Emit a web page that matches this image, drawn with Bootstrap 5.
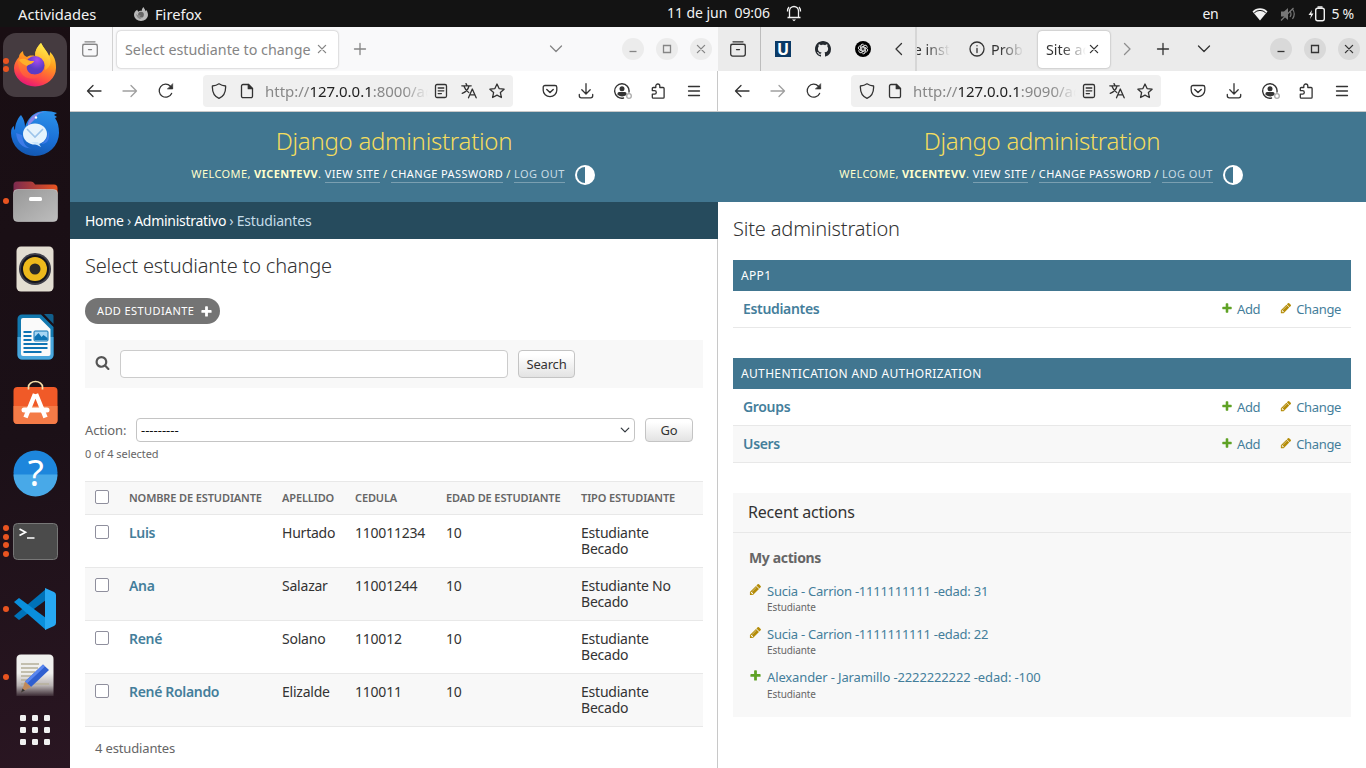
<!DOCTYPE html>
<html lang="es">
<head>
<meta charset="utf-8">
<meta name="viewport" content="width=device-width, initial-scale=1">
<title>Django administration</title>
<link href="https://cdn.jsdelivr.net/npm/bootstrap@5.3.0/dist/css/bootstrap.min.css" rel="stylesheet">
<style>
  :root { --primary:#417690; --lk:#447e9b; --crumb:#264b5d; --hair:#e8e8e8; --soft:#f8f8f8; }
  body { width:1366px; height:768px; overflow:hidden; font-family:"Noto Sans","Open Sans",sans-serif; font-size:14px; line-height:16px; color:#333; background:#fff; }
  svg { display:block; flex:none; }
  .i16 { width:16px; height:16px; fill:none; stroke:currentColor; stroke-width:1.3; stroke-linecap:round; stroke-linejoin:round; }

  /* desktop panel */
  .top-panel { height:27px; background:#131313; color:#f2f2f2; font-size:14px; letter-spacing:-.25px; display:grid; grid-template-columns:134px 533px 1fr 48px 1fr; }
  .top-panel .menu-text { font-size:14.7px; letter-spacing:0; }
  .top-panel .clock { letter-spacing:-.05px; padding-bottom:1px; }
  .desk { height:741px; }

  /* dock */
  .dock { width:70px; background:linear-gradient(165deg,#190e13 0%,#1b1017 55%,#2a1622 100%); padding-top:4px; }
  .slot { height:68px; position:relative; padding:2px 3px; }
  .slot .tile { width:64px; height:64px; border-radius:13px; }
  .slot.active .tile { background:#453b40; }
  .dots { position:absolute; left:3px; top:0; height:68px; gap:2.6px; }
  .dots i { width:6px; height:6px; border-radius:50%; background:#e95420; }

  /* browser window */
  .win { width:648px; background:#fff; }
  .win.left { box-shadow:inset -1px 0 #c8c8c8; }
  .tabs { height:44px; background:#ebebeb; color:#333; }
  .left .tabs { background:#f9f9fa; color:#858585; }
  .tabs .cell { height:44px; }
  .archive { width:43px; border-right:1px solid #bdbdbd; padding-right:3px; }
  .left .archive { border-color:#d2d2d2; }
  .tab-on { height:37px; border-radius:4px; background:#fff; box-shadow:0 0 2px rgba(0,0,0,.38); font-size:14.3px; }
  .left .tab-on { width:221px; margin-left:4px; padding-left:8px; }
  .right .tab-on { width:72px; margin-left:14px; padding-left:8px; }
  .clip { overflow:hidden; white-space:nowrap; line-height:22px; }
  .tabs .clip { padding-top:1px; }
  .fade-r { -webkit-mask-image:linear-gradient(90deg,#000 calc(100% - 24px),transparent); mask-image:linear-gradient(90deg,#000 calc(100% - 24px),transparent); }
  .wbtn { width:22px; height:22px; border-radius:50%; background:#d9d9d9; }
  .left .wbtn { background:#ececec; }
  .tools { height:41px; border-bottom:1px solid #c9c9c9; padding:0 5px 0 6px; color:#333; }
  .tools .tb { width:36px; }
  .urlbar { width:310px; height:32px; background:#f0f0f0; border-radius:4px; margin:0 19px; padding:0 8px; font-size:15px; }
  .url { width:163px; margin-left:10px; color:#888; letter-spacing:-.02px; }
  .url b { font-weight:400; color:#222; }

  /* admin header */
  .adm-head { height:90px; background:var(--primary); padding-top:15px; }
  .adm-head h1 { font-size:24px; line-height:28px; font-weight:300; color:#f5dd5d; margin:0; letter-spacing:-.27px; }
  .user-line { font-size:11px; color:#ffc; letter-spacing:.4px; line-height:14px; margin-top:11px; height:15px; padding-right:2px; }
  .user-line svg { position:relative; top:1px; }
  .user-line a { color:#fff; text-decoration:none; border-bottom:1px solid rgba(255,255,255,.3); padding-bottom:1px; }
  .user-line a.out { color:#c9dbe4; }
  .crumbs { height:37px; background:var(--crumb); padding-left:15px; color:#c4dce8; --bs-breadcrumb-divider:'›'; }
  .crumbs .breadcrumb-item { font-size:14px; letter-spacing:-.28px; padding:0; }
  .crumbs .breadcrumb-item + .breadcrumb-item::before { padding:0 3.2px; color:#c4dce8; }
  .crumbs .breadcrumb-item a { color:#fff; text-decoration:none; }
  .crumbs .breadcrumb-item.active { color:#c4dce8; letter-spacing:-.16px; }
  .page-title { font-size:20px; line-height:24px; font-weight:300; margin:0; letter-spacing:-.17px; }

  /* change list */
  .btn-pill { width:135px; height:26px; border-radius:13px; background:#747474; color:#fff; font-size:11px; letter-spacing:.4px; padding:0 7px 0 12px; }
  .searchbar { height:48px; background:var(--soft); padding:0 10px; }
  .searchbar .form-control { width:388px; height:28px; border-color:#ccc; border-radius:4px; padding:0 6px; }
  .btn-soft { border:1px solid #c4c4c4; border-radius:4px; background:linear-gradient(#fff 15%,#e3e3e3); font-size:13px; color:#333; line-height:16px; padding:0; letter-spacing:-.2px; }
  .action-line { font-size:13px; color:#666; letter-spacing:-.1px; }
  .action-line .form-select { width:499px; height:24px; border-color:#c4c4c4; border-radius:4px; font-size:13px; line-height:16px; padding:0 4px; color:#111; background-position:right 4px center; background-size:10px; }
  .counter { font-size:11px; color:#666; line-height:14px; letter-spacing:-.05px; }
  .grid-list { width:618px; table-layout:fixed; border-collapse:separate; border-spacing:0; margin:0; }
  .grid-list > :not(caption) > * > * { padding:10px; border-bottom:1px solid var(--hair); line-height:16px; vertical-align:top; color:#333; letter-spacing:-.22px; }
  .grid-list > thead > tr > th { height:33px; padding:8px 10px 8px; font-size:11px; line-height:16px; color:#666; font-weight:600; background:var(--soft); border-top:1px solid var(--hair); letter-spacing:-.12px; white-space:nowrap; }
  .grid-list > tbody > tr:nth-child(even) > td { background:var(--soft); }
  .grid-list a { color:var(--lk); text-decoration:none; font-weight:600; letter-spacing:-.33px; }
  .grid-list .form-check-input { width:14px; height:14px; margin:0; border:1px solid #8f8f9d; border-radius:2px; display:block; float:none; }
  .foot-count { font-size:13px; color:#666; padding:13px 10px; letter-spacing:-.15px; }

  /* index */
  .mod-head { height:31px; background:var(--primary); color:#fff; font-size:12px; letter-spacing:.34px; padding:0 8px; }
  .mod-row { height:37px; border-bottom:1px solid var(--hair); padding:0 10px; }
  .mod-row:nth-child(3) { background:var(--soft); }
  .mod-row a, .acts a { color:var(--lk); text-decoration:none; }
  .mod-row .nm { font-weight:600; letter-spacing:-.33px; }
  .mod-row .op { font-size:13px; letter-spacing:-.36px; }
  .mod-row .op svg { margin-right:4px; position:relative; top:-1px; }
  .recent { height:224px; background:var(--soft); }
  .recent h2 { height:40px; border-bottom:1px solid var(--hair); font-size:16px; font-weight:400; margin:0; padding:0 15px; letter-spacing:-.18px; }
  .recent h3 { font-size:14px; line-height:16px; font-weight:700; color:#666; margin:17px 16px 0; letter-spacing:-.36px; }
  .acts { margin:16px 16px 0; font-size:13px; }
  .acts li { height:43px; padding-top:1px; }
  .acts a { display:block; letter-spacing:-.25px; }
  .acts li:last-child a { letter-spacing:-.13px; }
  .acts span { display:block; font-size:10px; line-height:12px; color:#666; margin-top:2px; letter-spacing:-.1px; }
  .acts li:last-child span { margin-top:3px; }
</style>
</head>
<body>
<svg width="0" height="0" class="position-absolute" aria-hidden="true">
  <defs>
    <symbol id="archive" viewBox="0 0 16 16"><path d="M3 .8h10M1 3.3h14"/><rect x=".7" y="3.3" width="14.6" height="11.8" rx="2"/><path d="M6.5 8.6h3"/></symbol>
    <symbol id="x" viewBox="0 0 16 16"><path d="M4.4 4.4l7.2 7.2M11.6 4.4l-7.2 7.2"/></symbol>
    <symbol id="plus" viewBox="0 0 16 16"><path d="M8 2.5v11M2.5 8h11"/></symbol>
    <symbol id="down" viewBox="0 0 16 16"><path d="M2.5 5l5.5 5.5L13.500 5"/></symbol>
    <symbol id="lt" viewBox="0 0 16 16"><path d="M10.500 2.500L5 8l5.500 5.500"/></symbol>
    <symbol id="gt" viewBox="0 0 16 16"><path d="M5.500 2.500L11 8l-5.500 5.500"/></symbol>
    <symbol id="min" viewBox="0 0 16 16"><path d="M4.500 10.500h7" stroke-linecap="butt"/></symbol>
    <symbol id="max" viewBox="0 0 16 16"><path d="M4.500 4.500h7v7h-7z" stroke-linejoin="miter"/></symbol>
    <symbol id="back" viewBox="0 0 16 16"><path d="M15 8H1.500M7 2.500L1.500 8 7 13.500"/></symbol>
    <symbol id="fwd" viewBox="0 0 16 16"><path d="M1 8h13.500M9 2.500L14.500 8 9 13.500"/></symbol>
    <symbol id="reload" viewBox="0 0 16 16"><path d="M13.600 10.400A6.500 6.500 0 1 1 12.400 3.200L14.200 5"/><path d="M14.700 1v5h-5z" fill="currentColor" stroke-width=".6"/></symbol>
    <symbol id="shield" viewBox="0 0 16 16"><path d="M8 .8C6 2.200 3.800 2.800 1.400 3c-.3 5.800 1.300 10 6.600 12.300C13.300 13 14.900 8.800 14.600 3 12.200 2.800 10 2.200 8 .8z"/></symbol>
    <symbol id="page" viewBox="0 0 16 16"><path d="M4 1.500h5.500l4 4v7.700a1.500 1.500 0 0 1-1.500 1.500H4a1.500 1.500 0 0 1-1.500-1.500V3A1.500 1.500 0 0 1 4 1.500z"/><path d="M9.300 1.500v4.200h4.200z" fill="currentColor"/></symbol>
    <symbol id="reader" viewBox="0 0 16 16"><rect x="2.500" y="1.500" width="11" height="13" rx="1.500"/><path d="M5.200 5h5.600M5.200 7.800h5.600M5.200 10.600h3.200"/></symbol>
    <symbol id="trans" viewBox="0 0 16 16"><path d="M.8 2.800h9.400M5 .6l1 2M8 3C7.300 6 4.500 9 1.200 10.300M3 3.200c1 3 2.600 5 4.800 6.300" /><path d="M7.500 14.800L11.300 6l3.900 8.800M8.900 11.800h5"/></symbol>
    <symbol id="star" viewBox="0 0 16 16"><path d="M8 1l2.100 4.600 5 .6-3.700 3.400 1 4.900L8 12.100l-4.400 2.400 1-4.900L.9 6.200l5-.6z"/></symbol>
    <symbol id="pocket" viewBox="0 0 16 16"><path d="M3 2.500h10a1.800 1.800 0 0 1 1.800 1.800v3a6.800 6.400 0 0 1-13.600 0v-3A1.800 1.800 0 0 1 3 2.500z"/><path d="M4.800 6.500L8 9.500l3.200-3" stroke-width="1.500"/></symbol>
    <symbol id="dl" viewBox="0 0 16 16"><path d="M8 .7v10M3.800 6.800L8 11l4.200-4.200M1.300 11.500v1.300a2 2 0 0 0 2 2h9.400a2 2 0 0 0 2-2v-1.300"/></symbol>
    <symbol id="acct" viewBox="0 0 20 16"><path d="M11.500 15A7.200 7.200 0 1 1 17 9" stroke-width="1.400"/><circle cx="10" cy="5.800" r="2.500" fill="currentColor" stroke="none"/><path d="M5.500 11.800V10.500q0-1.500 1.500-1.500h6q1.500 0 1.500 1.500V12Q10 15 5.500 11.800z" fill="currentColor" stroke="none"/><circle cx="17" cy="13" r="2.300" stroke="#aaa"/></symbol>
    <symbol id="puzzle" viewBox="0 0 16 16"><path d="M5.800 4.500V3a2 2 0 0 1 4 0v1.500h3.300a1 1 0 0 1 1 1v8.700a1 1 0 0 1-1 1H3.300a1 1 0 0 1-1-1v-3h2.200a1.700 1.700 0 0 0 0-3.600H2.300V5.500a1 1 0 0 1 1-1z"/></symbol>
    <symbol id="menu" viewBox="0 0 16 16"><path d="M2.500 3.500h11M2.500 8h11M2.500 12.500h11"/></symbol>
    <symbol id="info" viewBox="0 0 16 16"><circle cx="8" cy="8" r="7"/><path d="M8 7.500v4M8 4.600v.2"/></symbol>
    <symbol id="add" viewBox="0 0 1792 1792"><path stroke="none" fill="currentColor" d="M1600 796v192q0 40-28 68t-68 28h-416v416q0 40-28 68t-68 28h-192q-40 0-68-28t-28-68v-416h-416q-40 0-68-28t-28-68v-192q0-40 28-68t68-28h416v-416q0-40 28-68t68-28h192q40 0 68 28t28 68v416h416q40 0 68 28t28 68z"/></symbol>
    <symbol id="pen" viewBox="0 0 1792 1792"><path fill="currentColor" d="M491 1536l91-91-235-235-91 91v107h128v128h107zm523-928q0-22-22-22-10 0-17 7l-542 542q-7 7-7 17 0 22 22 22 10 0 17-7l542-542q7-7 7-17zm-54-192l416 416-832 832h-416v-416zm683 96q0 53-37 90l-166 166-416-416 166-165q36-38 90-38 53 0 91 38l235 234q37 39 37 91z"/></symbol>
    <symbol id="theme" viewBox="0 0 20 20"><circle cx="10" cy="10" r="10" fill="#fff"/><path d="M10 2a8 8 0 0 0 0 16z" fill="#417690"/></symbol>
    <linearGradient id="fx1" x1=".7" y1="0" x2=".3" y2="1"><stop offset="0" stop-color="#ffe93c"/><stop offset=".4" stop-color="#ff9a1f"/><stop offset=".75" stop-color="#ff4a45"/><stop offset="1" stop-color="#e4127c"/></linearGradient>
    <linearGradient id="fx2" x1=".6" y1="0" x2=".3" y2="1"><stop offset="0" stop-color="#fff44f"/><stop offset="1" stop-color="#ff9a1f"/></linearGradient>
    <radialGradient id="fx3" cx=".6" cy=".2"><stop offset="0" stop-color="#a84cf0"/><stop offset="1" stop-color="#5b3bc4"/></radialGradient>
    <linearGradient id="fx4" x1="0" y1="0" x2="0" y2="1"><stop offset="0" stop-color="#ff8a25"/><stop offset="1" stop-color="#ff4f45"/></linearGradient>
    <linearGradient id="tb1" x1=".6" y1="0" x2=".4" y2="1"><stop offset="0" stop-color="#2a8fe8"/><stop offset=".6" stop-color="#1a6fd6"/><stop offset="1" stop-color="#1357b0"/></linearGradient>
    <linearGradient id="fd1"><stop offset="0" stop-color="#7c2a4f"/><stop offset="1" stop-color="#e95420"/></linearGradient>
    <linearGradient id="fd2" x1="0" y1="0" x2="1" y2="1"><stop offset="0" stop-color="#989898"/><stop offset="1" stop-color="#bdbdbd"/></linearGradient>
    <linearGradient id="ed" x1="0" y1="0" x2="0" y2="1"><stop offset=".45" stop-color="#f0f0ee"/><stop offset=".75" stop-color="#b8b2b2"/><stop offset="1" stop-color="#3a2a33"/></linearGradient>
  </defs>
</svg>

<header class="top-panel align-items-center">
  <span class="menu-text" style="padding-left:18px">Actividades</span>
  <span class="menu-text d-flex align-items-center" style="gap:7px">
    <svg width="14" height="14" viewBox="0 0 42 42"><path d="M28 0c-3 4-5 8-5 12-4-1-8 0-9 2-3-2-4-4-4-6C3 12 0 17 0 24a21 18 0 0 0 42 0c0-8-4-14-6-15 0 2 0 3-1 4C34 8 30 4 28 0z" fill="#b9b9b9"/><circle cx="21" cy="23" r="8.500" fill="#666"/><path d="M6 20q8 8 14 3-5 9 3 13-14 1-17-16z" fill="#8a8a8a"/></svg>
    Firefox</span>
  <span class="clock d-flex align-items-center">11 de jun&nbsp; 09:06
    <svg class="ms-3" width="16" height="18" viewBox="0 0 16 18" fill="none" stroke="#f2f2f2" stroke-width="1.300"><path d="M3.500 13.500V7a4.500 4.500 0 0 1 9 0v6.500M1.500 13.500h13M3 3q-1.500 1.500-1.500 4.500M13 3q1.500 1.500 1.500 4.500"/><path d="M6 15.500h4l-2 1.800z" fill="#f2f2f2" stroke="none"/></svg></span>
  <span></span>
  <span class="d-flex align-items-center justify-content-end" style="padding-right:12px">en
    <svg style="margin-left:34px" width="16" height="14" viewBox="0 0 16 14"><path d="M.5 4.500a10.500 10.500 0 0 1 15 0L8 13.500z" fill="#f2f2f2"/><path d="M2.300 5.800a8 8 0 0 1 11.400 0" stroke="#131313" fill="none"/></svg>
    <svg style="margin-left:12px" width="16" height="16" viewBox="0 0 16 16"><path d="M1 5.500h3l4-3.500v12l-4-3.500H1z" fill="#777"/><path d="M10 5q2 3 0 6M12.500 3q3.500 5 0 10M1 14.500L13.500 2" stroke="#777" stroke-width="1.200" fill="none"/></svg>
    <svg style="margin-left:12px" width="17" height="16" viewBox="0 0 17 16"><path d="M4 4L.5 9H3l-1 4 3.500-5.500H3.300z" fill="#f2f2f2"/><rect x="7.700" y="2.200" width="8.600" height="12.600" rx="2" fill="none" stroke="#f2f2f2" stroke-width="1.400"/><path d="M9.500 1h5" stroke="#f2f2f2" stroke-width="1.500"/></svg>
    <span style="margin-left:6px">5 %</span></span>
</header>

<div class="desk d-flex">
  <nav class="dock d-flex flex-column flex-shrink-0">
    <div class="slot active"><div class="dots d-flex flex-column justify-content-center"><i></i><i></i></div>
      <div class="tile d-flex align-items-center justify-content-center">
        <svg width="42" height="44" viewBox="0 0 42 44"><path d="M27 0c-4 4-6 8-6 13-4-1-7 0-8 1-3-1-4-3-4-6-3 2-4 4-4 6C2 17 0 21 0 25a21 18.500 0 0 0 42 0c0-8-2-12-6-16 0 2 0 3-1 4C33 8 29 4 27 0z" fill="url(#fx1)"/><path d="M27 0c-5 5-7 10-5 14 8 1 10 7 9 13 6-3 7-9 4-14C33 8 29 5 27 0z" fill="url(#fx2)"/><circle cx="21" cy="22.500" r="9.500" fill="url(#fx3)"/><path d="M4 17c4-2 7-1 9 0 2 1 5 1 7 1-1 3-5 3-7 5-1 3 1 6 4 8 5 1 9 0 12-3-1 6-8 9-15 7C8 34 4 26 4 17z" fill="url(#fx4)"/><path d="M5 17c4-2 6-1 8 0s5 1 7 1c-1 3-5 3-7 5-3-1-6-3-8-6z" fill="#ffb02a"/></svg>
      </div></div>
    <div class="slot"><div class="tile d-flex align-items-center justify-content-center">
        <svg width="48" height="46" viewBox="0 0 48 46" style="margin-top:2px"><path d="M25 2c6-3 15-2 21 0l-3 2 3 2-2 1c3 4 4 9 4 15a24 23 0 0 1-48 0c0-4 1-6 3-7 0 2 0 3 1 4 0-5 2-11 6-15 3 4 4 8 4 12 2-6 5-11 11-14z" fill="url(#tb1)"/><path d="M17 12C20 4 27 1 34 1c-7 1-9 4-10 7l-7 7z" fill="#8a86ea"/><circle cx="25" cy="6.500" r="1.200" fill="#fff"/><ellipse cx="24" cy="23" rx="12" ry="10.500" fill="#e6f3fc"/><path d="M16 18l8 8 8-8" fill="none" stroke="#9cc4ea" stroke-width="1.600"/><path d="M20 31l10 5-3-5z" fill="#cbe6fb"/><path d="M5 22q2 17 18 15-10 2-12-13zM37 20q0 10-7 13 9 0 8-11z" fill="#3d7be8"/></svg>
      </div></div>
    <div class="slot"><div class="dots d-flex flex-column justify-content-center"><i></i></div><div class="tile d-flex align-items-center justify-content-center">
        <svg width="45" height="41" viewBox="0 0 45 41"><path d="M.5 12V4a3.500 3.500 0 0 1 3.500-3.500h14q2 0 3 1.500l1 1.500h19A3.500 3.500 0 0 1 44.500 7v6z" fill="url(#fd1)"/><rect x=".5" y="8.500" width="44" height="32" rx="4" fill="url(#fd2)" stroke="#c9c9c9" stroke-width=".6"/><rect x="16" y="16" width="13" height="4" rx="1.500" fill="#fff"/></svg>
      </div></div>
    <div class="slot"><div class="tile d-flex align-items-center justify-content-center">
        <svg width="38" height="46" viewBox="0 0 38 46"><rect x=".5" y=".5" width="37" height="45" rx="4.500" fill="#e3ded2"/><circle cx="19" cy="23" r="16" fill="#3e3e48"/><circle cx="19" cy="23" r="14" fill="#15151c"/><circle cx="19" cy="23" r="12" fill="#edb91c"/><circle cx="19" cy="23" r="5.500" fill="#2b2a28"/></svg>
      </div></div>
    <div class="slot"><div class="tile d-flex align-items-center justify-content-center">
        <svg width="37" height="46" viewBox="0 0 37 46"><path d="M5 .5h19L36.500 13v28a4.500 4.500 0 0 1-4.500 4.500H5A4.500 4.500 0 0 1 .5 41V5A4.500 4.500 0 0 1 5 .5z" fill="#1278ae"/><path d="M.5 23h36v18a4.500 4.500 0 0 1-4.500 4.500H5A4.500 4.500 0 0 1 .5 41z" fill="#49a6dc"/><path d="M6 4h16.500L33.500 15v25a2 2 0 0 1-2 2H6a2 2 0 0 1-2-2V6a2 2 0 0 1 2-2z" fill="#fafafa"/><path d="M27 0h7.500a2 2 0 0 1 2 2v8z" fill="#115f8c"/><path d="M6.500 18h8M6.500 22h8M6.500 26h8M6.500 30h24M6.500 34h24M6.500 38h18" stroke="#0f74b4" stroke-width="2"/><rect x="17" y="17" width="14" height="10" rx="1" fill="#a6d5f3" stroke="#0f74b4"/><path d="M17.500 26v-3l4-4 3 4 2-2 4 3v2z" fill="#0f74b4"/></svg>
      </div></div>
    <div class="slot"><div class="tile d-flex align-items-center justify-content-center">
        <svg width="45" height="46" viewBox="0 0 45 46" style="margin-bottom:7px"><rect x=".5" y="8" width="44" height="37" rx="4" fill="#f05a28"/><path d="M.5 27h44v14a4 4 0 0 1-4 4h-36a4 4 0 0 1-4-4z" fill="#f47b47"/><path d="M15.500 10.500V8a7 5.500 0 0 1 14 0v2.500" fill="none" stroke="#f6dfaa" stroke-width="1.700"/><path d="M12.500 38.500L22 15M32.500 38.500L23 15" stroke="#fff" stroke-width="4.500"/><rect x="8.500" y="28.500" width="28" height="5" rx="2.500" fill="#fff"/></svg>
      </div></div>
    <div class="slot"><div class="tile d-flex align-items-center justify-content-center">
        <svg width="45" height="45" viewBox="0 0 45 45" overflow="visible" style="margin-bottom:1px"><circle cx="22.500" cy="22.500" r="22" fill="#1d86dc"/><path d="M.5 24.500a22 22 0 0 0 44 0z" fill="#48a9e8"/><text x="22.800" y="36" text-anchor="middle" font-family="Noto Sans" font-size="37" fill="#fff">?</text></svg>
      </div></div>
    <div class="slot"><div class="dots d-flex flex-column justify-content-center"><i></i><i></i><i></i><i></i></div><div class="tile d-flex align-items-center justify-content-center">
        <svg width="45" height="37" viewBox="0 0 45 37"><rect x=".5" y=".5" width="44" height="36" rx="4" fill="#4b4b4b" stroke="#777"/><path d="M6.500 6l6 3.200-6 3.200M14 15h7.500" fill="none" stroke="#fff" stroke-width="1.700"/></svg>
      </div></div>
    <div class="slot"><div class="dots d-flex flex-column justify-content-center"><i></i></div><div class="tile d-flex align-items-center justify-content-center">
        <svg width="42" height="42" viewBox="0 0 42 42"><path d="M0 28l5 4 27-20V1L0 28z" fill="#0072b8"/><path d="M0 14l5-4 27 20v12L0 14z" fill="#0a8fdc"/><path d="M31 0l9 4q2 1 2 3v28q0 2-2 3l-9 4z" fill="#27a8f2"/></svg>
      </div></div>
    <div class="slot"><div class="dots d-flex flex-column justify-content-center"><i></i></div><div class="tile d-flex align-items-center justify-content-center">
        <svg width="38" height="42" viewBox="0 0 38 42" style="margin-bottom:4px"><path d="M.5 42V5Q.5.500 5 .5h28q4.500 0 4.500 4.500v37z" fill="url(#ed)"/><path d="M5 10h18M5 14h17M5 18h14M5 22h10M5 26h10M5 30h28" stroke="#b9b39f" stroke-width="2" opacity=".8"/><path d="M27 10.500l6 5.500L15 33l-6-5.500z" fill="#2f5fd0"/><path d="M27 10.500l2 2L11 29.500l-2-2z" fill="#5a86ee"/><path d="M9 27.500l6 5.500-9.500 5z" fill="#c08a5a"/><path d="M6.500 34.500l2.500 2-4 2z" fill="#333"/></svg>
      </div></div>
    <div class="d-flex justify-content-center" style="padding-top:4px">
      <svg width="30" height="30" viewBox="0 0 30 30" fill="#f1f1f1"><g id="r3"><rect width="6" height="6" rx="1.200"/><rect x="12" width="6" height="6" rx="1.200"/><rect x="24" width="6" height="6" rx="1.200"/></g><use href="#r3" y="12"/><use href="#r3" y="24"/></svg>
    </div>
  </nav>

  <!-- change list window -->
  <section class="win left flex-shrink-0">
    <div class="tabs d-flex align-items-center">
      <div class="cell archive d-flex align-items-center justify-content-center"><svg class="i16"><use href="#archive"/></svg></div>
      <div class="tab-on d-flex align-items-center"><span class="clip" style="width:187px">Select estudiante to change</span><svg class="i16" style="margin-left:2px"><use href="#x"/></svg></div>
      <svg class="i16" style="margin-left:14px"><use href="#plus"/></svg>
      <svg class="i16 ms-auto" style="margin-right:58px"><use href="#down"/></svg>
      <div class="d-flex" style="gap:12px;margin-right:6px">
        <span class="wbtn d-flex align-items-center justify-content-center"><svg class="i16"><use href="#min"/></svg></span>
        <span class="wbtn d-flex align-items-center justify-content-center"><svg class="i16"><use href="#max"/></svg></span>
        <span class="wbtn d-flex align-items-center justify-content-center"><svg class="i16"><use href="#x"/></svg></span>
      </div>
    </div>
    <div class="tools d-flex align-items-center">
      <span class="tb d-flex justify-content-center"><svg class="i16"><use href="#back"/></svg></span>
      <span class="tb d-flex justify-content-center text-black-50"><svg class="i16 opacity-75"><use href="#fwd"/></svg></span>
      <span class="tb d-flex justify-content-center"><svg class="i16"><use href="#reload"/></svg></span>
      <div class="urlbar d-flex align-items-center">
        <svg class="i16"><use href="#shield"/></svg><svg class="i16" style="margin-left:12px"><use href="#page"/></svg>
        <span class="url clip fade-r">http://<b>127.0.0.1</b>:8000/admin</span>
        <div class="d-flex ms-auto" style="gap:12px"><svg class="i16"><use href="#reader"/></svg><svg class="i16"><use href="#trans"/></svg><svg class="i16"><use href="#star"/></svg></div>
      </div>
      <span class="tb d-flex justify-content-center"><svg class="i16"><use href="#pocket"/></svg></span>
      <span class="tb d-flex justify-content-center"><svg class="i16"><use href="#dl"/></svg></span>
      <span class="tb d-flex justify-content-center"><svg class="i16" style="width:20px"><use href="#acct"/></svg></span>
      <span class="tb d-flex justify-content-center"><svg class="i16"><use href="#puzzle"/></svg></span>
      <span class="tb d-flex justify-content-center"><svg class="i16"><use href="#menu"/></svg></span>
    </div>
    <div class="adm-head text-center">
      <h1>Django administration</h1>
      <div class="user-line d-flex align-items-center justify-content-center text-uppercase"><span>Welcome, <strong>vicentevv</strong>. <a href="#">View site</a> / <a href="#">Change password</a> / <a href="#" class="out">Log out</a></span><svg width="20" height="20" style="margin-left:10px"><use href="#theme"/></svg></div>
    </div>
    <ol class="crumbs breadcrumb m-0 align-items-center"><li class="breadcrumb-item"><a href="#">Home</a></li><li class="breadcrumb-item"><a href="#">Administrativo</a></li><li class="breadcrumb-item active">Estudiantes</li></ol>
    <main style="padding:15px 15px 0">
      <h1 class="page-title">Select estudiante to change</h1>
      <a href="#" class="btn-pill d-flex align-items-center justify-content-between text-uppercase text-decoration-none" style="margin-top:20px">Add estudiante<svg width="13" height="13"><use href="#add"/></svg></a>
      <form class="searchbar d-flex align-items-center" style="margin-top:16px">
        <svg width="15" height="15" viewBox="0 0 1792 1792" style="margin:0 10px 3px 0"><path fill="#555" d="M1216 832q0-185-131.500-316.500t-316.500-131.500-316.500 131.500-131.500 316.500 131.500 316.500 316.500 131.500 316.500-131.500 131.500-316.500zm512 832q0 52-38 90t-90 38q-54 0-90-38l-343-342q-179 124-399 124-143 0-273.500-55.500t-225-150-150-225-55.500-273.500 55.500-273.500 150-225 225-150 273.500-55.500 273.500 55.500 225 150 150 225 55.500 273.500q0 220-124 399l343 343q37 37 37 90z"/></svg>
        <input class="form-control" type="text" aria-label="Search">
        <button class="btn btn-soft" type="button" style="width:57px;height:28px;margin-left:10px">Search</button>
      </form>
      <div class="action-line d-flex align-items-center" style="margin-top:30px">
        <label style="width:51px">Action:</label>
        <select class="form-select" aria-label="Action"><option>---------</option></select>
        <button class="btn btn-soft" type="button" style="width:48px;height:24px;margin-left:10px">Go</button>
      </div>
      <div class="counter" style="margin:5px 0 20px">0 of 4 selected</div>
      <table class="table grid-list">
        <colgroup><col style="width:34px"><col style="width:153px"><col style="width:73px"><col style="width:91px"><col style="width:135px"><col style="width:132px"></colgroup>
        <thead><tr class="text-uppercase"><th><input class="form-check-input" type="checkbox"></th><th>Nombre de estudiante</th><th>Apellido</th><th>Cedula</th><th>Edad de estudiante</th><th>Tipo estudiante</th></tr></thead>
        <tbody>
          <tr><td><input class="form-check-input" type="checkbox"></td><td><a href="#">Luis</a></td><td>Hurtado</td><td>110011234</td><td>10</td><td>Estudiante<br>Becado</td></tr>
          <tr><td><input class="form-check-input" type="checkbox"></td><td><a href="#">Ana</a></td><td>Salazar</td><td>11001244</td><td>10</td><td>Estudiante No<br>Becado</td></tr>
          <tr><td><input class="form-check-input" type="checkbox"></td><td><a href="#">René</a></td><td>Solano</td><td>110012</td><td>10</td><td>Estudiante<br>Becado</td></tr>
          <tr><td><input class="form-check-input" type="checkbox"></td><td><a href="#">René Rolando</a></td><td>Elizalde</td><td>110011</td><td>10</td><td>Estudiante<br>Becado</td></tr>
        </tbody>
      </table>
      <div class="foot-count">4 estudiantes</div>
    </main>
  </section>

  <!-- index window -->
  <section class="win right flex-shrink-0">
    <div class="tabs d-flex align-items-center">
      <div class="cell archive d-flex align-items-center justify-content-center"><svg class="i16"><use href="#archive"/></svg></div>
      <div class="d-flex align-items-center" style="gap:24px;margin-left:14px">
        <svg width="16" height="16" viewBox="0 0 16 16" overflow="visible"><path d="M0 0h16v16H0z" fill="#0b3a66"/><text x="8" y="14" text-anchor="middle" font-family="Noto Sans" font-weight="700" font-size="16" fill="#fff">U</text></svg>
        <svg width="16" height="16" viewBox="0 0 16 16"><path fill="#24292f" d="M8 0C3.580 0 0 3.580 0 8c0 3.540 2.290 6.530 5.470 7.590.4.070.55-.17.55-.38 0-.19-.01-.82-.01-1.490-2.010.37-2.530-.49-2.690-.94-.09-.23-.48-.94-.82-1.130-.28-.15-.68-.52-.01-.53.63-.01 1.080.58 1.230.82.72 1.210 1.870.87 2.330.66.070-.52.280-.87.510-1.070-1.780-.2-3.640-.89-3.640-3.950 0-.87.310-1.590.82-2.150-.08-.2-.36-1.020.08-2.120 0 0 .67-.21 2.200.82.64-.18 1.320-.27 2-.27.68 0 1.360.09 2 .27 1.530-1.040 2.200-.82 2.200-.82.44 1.100.16 1.920.08 2.120.51.56.82 1.270.82 2.150 0 3.070-1.870 3.750-3.650 3.950.29.25.54.73.54 1.480 0 1.070-.01 1.930-.01 2.200 0 .21.15.46.55.38A8.010 8.010 0 0 0 16 8c0-4.420-3.580-8-8-8Z"/></svg>
        <svg width="16" height="16" viewBox="0 0 16 16" fill="none" stroke="#fff" stroke-width=".6"><circle cx="8" cy="8" r="8" fill="#000" stroke="none"/><g id="pet"><path d="M5.600 9.500V5.200a2.100 2.100 0 0 1 3.700-1.300M6.700 8.700V6.300L9.400 4.700a2 2 0 0 1 2.600.6"/></g><use href="#pet" transform="rotate(60 8 8)"/><use href="#pet" transform="rotate(120 8 8)"/><use href="#pet" transform="rotate(180 8 8)"/><use href="#pet" transform="rotate(240 8 8)"/><use href="#pet" transform="rotate(300 8 8)"/></svg>
      </div>
      <svg class="i16" style="margin-left:20px"><use href="#lt"/></svg>
      <div class="cell d-flex align-items-center" style="margin-left:8px;border-left:2px solid #d6d6d6;width:109px;font-size:14.300px">
        <span class="clip fade-r d-flex justify-content-end" style="width:34px">de inst</span>
        <svg class="i16" style="margin-left:19px"><use href="#info"/></svg>
        <span class="clip fade-r" style="width:34px;margin-left:6px">Proble</span>
      </div>
      <div class="tab-on d-flex align-items-center"><span class="clip fade-r" style="width:40px">Site admin</span><svg class="i16"><use href="#x"/></svg></div>
      <svg class="i16 opacity-50" style="margin-left:9px"><use href="#gt"/></svg>
      <svg class="i16" style="margin-left:20px"><use href="#plus"/></svg>
      <svg class="i16" style="margin-left:25px"><use href="#down"/></svg>
      <div class="d-flex ms-auto" style="gap:12px;margin-right:6px">
        <span class="wbtn d-flex align-items-center justify-content-center"><svg class="i16"><use href="#min"/></svg></span>
        <span class="wbtn d-flex align-items-center justify-content-center"><svg class="i16"><use href="#max"/></svg></span>
        <span class="wbtn d-flex align-items-center justify-content-center"><svg class="i16"><use href="#x"/></svg></span>
      </div>
    </div>
    <div class="tools d-flex align-items-center">
      <span class="tb d-flex justify-content-center"><svg class="i16"><use href="#back"/></svg></span>
      <span class="tb d-flex justify-content-center text-black-50"><svg class="i16 opacity-75"><use href="#fwd"/></svg></span>
      <span class="tb d-flex justify-content-center"><svg class="i16"><use href="#reload"/></svg></span>
      <div class="urlbar d-flex align-items-center">
        <svg class="i16"><use href="#shield"/></svg><svg class="i16" style="margin-left:12px"><use href="#page"/></svg>
        <span class="url clip fade-r">http://<b>127.0.0.1</b>:9090/admin</span>
        <div class="d-flex ms-auto" style="gap:12px"><svg class="i16"><use href="#reader"/></svg><svg class="i16"><use href="#trans"/></svg><svg class="i16"><use href="#star"/></svg></div>
      </div>
      <span class="tb d-flex justify-content-center"><svg class="i16"><use href="#pocket"/></svg></span>
      <span class="tb d-flex justify-content-center"><svg class="i16"><use href="#dl"/></svg></span>
      <span class="tb d-flex justify-content-center"><svg class="i16" style="width:20px"><use href="#acct"/></svg></span>
      <span class="tb d-flex justify-content-center"><svg class="i16"><use href="#puzzle"/></svg></span>
      <span class="tb d-flex justify-content-center"><svg class="i16"><use href="#menu"/></svg></span>
    </div>
    <div class="adm-head text-center">
      <h1>Django administration</h1>
      <div class="user-line d-flex align-items-center justify-content-center text-uppercase"><span>Welcome, <strong>vicentevv</strong>. <a href="#">View site</a> / <a href="#">Change password</a> / <a href="#" class="out">Log out</a></span><svg width="20" height="20" style="margin-left:10px"><use href="#theme"/></svg></div>
    </div>
    <main style="padding:15px 15px 0">
      <h1 class="page-title">Site administration</h1>
      <div style="margin-top:19px">
        <div class="mod-head d-flex align-items-center text-uppercase">App1</div>
        <div class="mod-row d-flex align-items-center"><a href="#" class="nm me-auto">Estudiantes</a><a href="#" class="op d-flex align-items-center"><svg width="12" height="12" color="#5fa225"><use href="#add"/></svg>Add</a><a href="#" class="op d-flex align-items-center ms-3 ps-1"><svg width="12" height="12" color="#b48c08"><use href="#pen"/></svg>Change</a></div>
      </div>
      <div style="margin-top:30px">
        <div class="mod-head d-flex align-items-center text-uppercase">Authentication and Authorization</div>
        <div class="mod-row d-flex align-items-center"><a href="#" class="nm me-auto">Groups</a><a href="#" class="op d-flex align-items-center"><svg width="12" height="12" color="#5fa225"><use href="#add"/></svg>Add</a><a href="#" class="op d-flex align-items-center ms-3 ps-1"><svg width="12" height="12" color="#b48c08"><use href="#pen"/></svg>Change</a></div>
        <div class="mod-row d-flex align-items-center"><a href="#" class="nm me-auto">Users</a><a href="#" class="op d-flex align-items-center"><svg width="12" height="12" color="#5fa225"><use href="#add"/></svg>Add</a><a href="#" class="op d-flex align-items-center ms-3 ps-1"><svg width="12" height="12" color="#b48c08"><use href="#pen"/></svg>Change</a></div>
      </div>
      <div class="recent" style="margin-top:30px">
        <h2 class="d-flex align-items-center">Recent actions</h2>
        <h3>My actions</h3>
        <ul class="acts list-unstyled">
          <li class="d-flex"><svg width="13" height="13" color="#b48c08" style="margin-right:5px"><use href="#pen"/></svg><div><a href="#">Sucia - Carrion -1111111111 -edad: 31</a><span>Estudiante</span></div></li>
          <li class="d-flex"><svg width="13" height="13" color="#b48c08" style="margin-right:5px"><use href="#pen"/></svg><div><a href="#">Sucia - Carrion -1111111111 -edad: 22</a><span>Estudiante</span></div></li>
          <li class="d-flex"><svg width="13" height="13" color="#5fa225" style="margin-right:5px"><use href="#add"/></svg><div><a href="#">Alexander - Jaramillo -2222222222 -edad: -100</a><span>Estudiante</span></div></li>
        </ul>
      </div>
    </main>
  </section>
</div>
<script src="https://cdn.jsdelivr.net/npm/bootstrap@5.3.0/dist/js/bootstrap.bundle.min.js"></script>
</body>
</html>
